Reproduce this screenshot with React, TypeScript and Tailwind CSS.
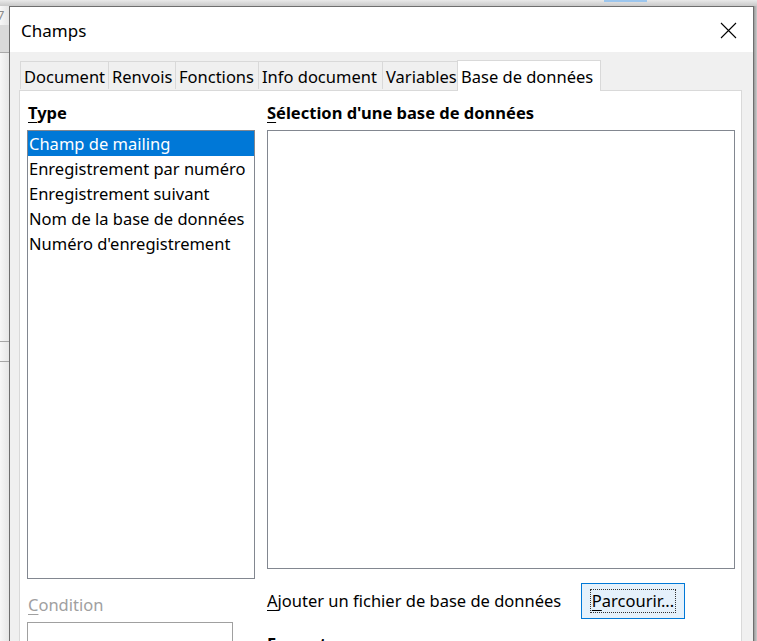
import { type ReactNode } from "react";

const TABS = [
  { label: "Document", w: "w-[88px]" },
  { label: "Renvois", w: "w-[67px]" },
  { label: "Fonctions", w: "w-[83px]" },
  { label: "Info document", w: "w-[124px]" },
  { label: "Variables", w: "w-[75px]" },
];

const TYPES = [
  "Champ de mailing",
  "Enregistrement par numéro",
  "Enregistrement suivant",
  "Nom de la base de données",
  "Numéro d'enregistrement",
];

function Mnemonic({ ch, rest }: { ch: string; rest: string }): ReactNode {
  return (
    <>
      <span className="underline underline-offset-[3px] decoration-1">{ch}</span>
      {rest}
    </>
  );
}

export default function App() {
  return (
    <div className="w-[757px] h-[641px] overflow-hidden flex flex-col bg-[#ececec] font-['Segoe_UI','Noto_Sans',sans-serif] text-[16.5px] text-black">
      {/* strip above the dialog */}
      <div className="h-[6px] shrink-0 flex bg-gradient-to-b from-[#e9e9e9] to-[#c9c9c9]">
        <div className="w-[604px]" />
        <div className="w-[43px] h-[2px] bg-[#cfe3f7] border border-[#9cc6ee]" />
      </div>

      <div className="flex flex-1 min-h-0">
        {/* left strip (window behind) */}
        <div className="w-[9px] shrink-0 flex flex-col bg-gradient-to-r from-[#f7f7f7] to-[#e6e6e6]">
          <div className="h-[19px] text-[13px] leading-[19px] text-[#8a8a8a] -ml-[3px] overflow-hidden">7</div>
          <div className="h-[28px] bg-[#dadada] border-b border-[#a9a9a9]" />
          <div className="h-[288px]" />
          <div className="h-[21px] border-t border-b border-[#a6a6a6]" />
          <div className="flex-1" />
        </div>

        {/* dialog */}
        <div className="w-[745px] shrink-0 flex flex-col border-t border-l border-r border-[#6e6e6e] bg-[#f0f0f0]">
          {/* title bar */}
          <div className="h-[45px] shrink-0 bg-white flex items-center justify-between pl-[11px] pr-[16px]">
            <span className="text-[17px] leading-none text-[#000] pt-[2px]">Champs</span>
            <svg width="17" height="17" viewBox="0 0 17 17" className="mt-[1px]">
              <path d="M1 1 L16 16 M16 1 L1 16" stroke="#000" strokeWidth="1.1" fill="none" />
            </svg>
          </div>

          {/* body */}
          <div className="flex-1 flex flex-col pt-[8px] pl-[9px] pr-[11px]">
            {/* tabs */}
            <div className="flex items-end pl-[1px] relative z-10">
              {TABS.map((t) => (
                <div
                  key={t.label}
                  className={`${t.w} h-[28px] mb-[1px] border-t border-l border-[#d9d9d9] last:border-r bg-[#f0f0f0] pl-[3px] pt-[2px] leading-[26px] whitespace-nowrap overflow-hidden`}
                >
                  {t.label}
                </div>
              ))}
              <div className="w-[144px] h-[31px] -mb-px border-t border-l border-r border-[#d9d9d9] bg-white pl-[3px] pt-[2px] leading-[28px] whitespace-nowrap">
                Base de données
              </div>
            </div>

            {/* panel */}
            <div className="flex-1 bg-white border border-[#d9d9d9] pt-[12px] pl-[7px] flex gap-[12px]">
              {/* left column */}
              <div className="w-[228px] flex flex-col">
                <div className="h-[20px] leading-[20px] font-bold mb-[7px] pl-[1px]">
                  <Mnemonic ch="T" rest="ype" />
                </div>
                <div className="h-[449px] border border-[#828790] flex flex-col">
                  {TYPES.map((t, i) => (
                    <div
                      key={t}
                      className={`h-[25px] leading-[25px] pl-[1px] whitespace-nowrap ${
                        i === 0 ? "bg-[#0078d7] text-white" : ""
                      }`}
                    >
                      {t}
                    </div>
                  ))}
                </div>
                <div className="h-[20px] leading-[20px] mt-[16px] mb-[7px] pl-[1px] text-[#a0a0a0]">
                  <Mnemonic ch="C" rest="ondition" />
                </div>
                <div className="w-[206px] h-[40px] border border-[#a0a0a0]" />
              </div>

              {/* right column */}
              <div className="w-[468px] flex flex-col">
                <div className="h-[20px] leading-[20px] font-bold mb-[7px]">
                  <Mnemonic ch="S" rest="élection d'une base de données" />
                </div>
                <div className="h-[439px] border border-[#828790]" />
                <div className="flex items-center mt-[14px] h-[36px]">
                  <span className="w-[314px] whitespace-nowrap">
                    <Mnemonic ch="A" rest="jouter un fichier de base de données" />
                  </span>
                  <div className="w-[104px] h-[36px] border border-[#0078d7] bg-[#e5f1fb] p-[5px_8px]">
                    <div className="h-full border border-dotted border-[#333] flex items-center justify-center whitespace-nowrap">
                      <Mnemonic ch="P" rest="arcourir..." />
                    </div>
                  </div>
                </div>
                <div className="h-[20px] leading-[20px] font-bold mt-[15px]">Format</div>
              </div>
            </div>
          </div>
        </div>

        {/* right strip */}
        <div className="flex-1 bg-gradient-to-r from-[#9a9a9a] to-[#cdcdcd]" />
      </div>
    </div>
  );
}
